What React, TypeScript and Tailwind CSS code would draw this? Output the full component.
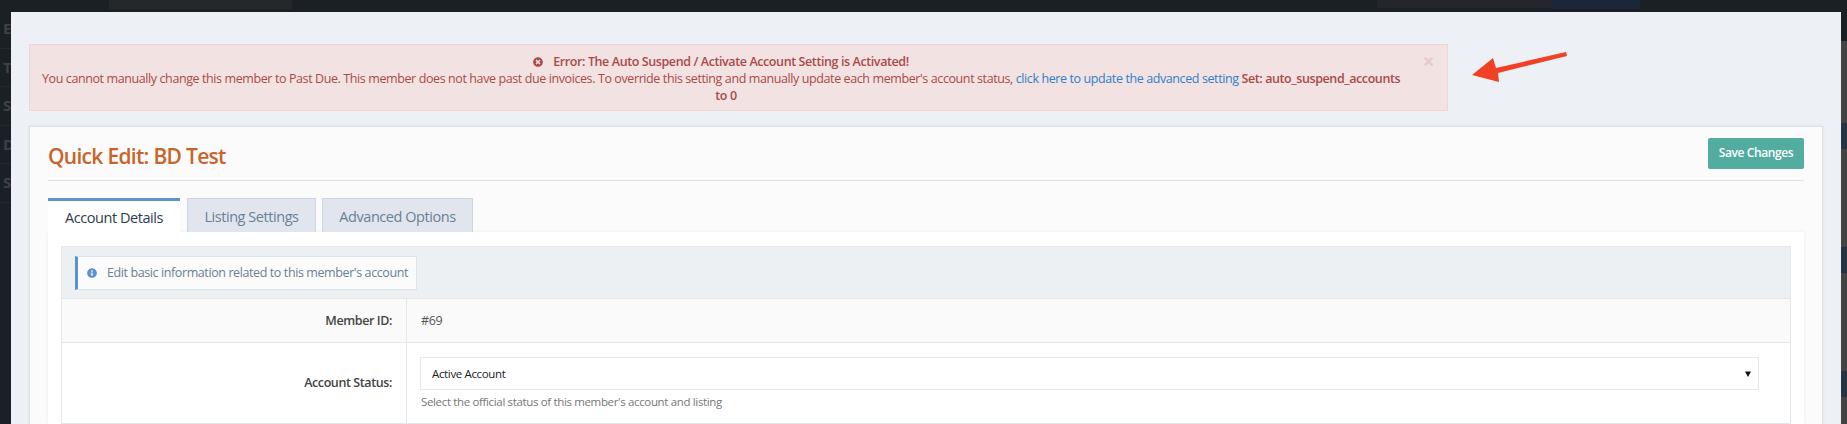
import React from "react";
import { FaInfoCircle, FaTimes, FaTimesCircle } from "react-icons/fa";

const sideLetters = ["E", "T", "S", "D", "S"];
const sideStripes = ["h-[41px]", "h-[82px]", "h-[26px]", "h-[98px]", "h-[26px]", "h-[98px]", "h-[26px]", "h-[27px]"];

function Backdrop() {
  return (
    <div className="h-full flex flex-col">
      <div className="h-[12px] flex shrink-0">
        <div className="w-[109px]" />
        <div className="w-[183px] h-[9px] bg-[#25272a]" />
        <div className="w-[1085px]" />
        <div className="w-[175px] h-[8px] bg-[#242629]" />
        <div className="w-[88px] h-[9px] bg-[#1c2639]" />
      </div>
      <div className="flex-1 flex justify-between">
        <div className="w-[11px] flex flex-col -mt-[2px] text-[15px] font-bold leading-[37.5px] text-[#3d4247]">
          {sideLetters.map((letter, i) => (
            <div key={i} className="pl-[3px] border-b border-[#23282d]">
              {letter}
            </div>
          ))}
        </div>
        <div className="w-[6px] -mt-[12px] flex flex-col">
          {sideStripes.map((h, i) => (
            <div
              key={i}
              className={`${h} ${i === 0 ? "bg-[#1b2024]" : i % 2 === 0 ? "bg-[#283341]" : "bg-[#444444]"}`}
            />
          ))}
        </div>
      </div>
    </div>
  );
}

function Alert() {
  return (
    <div className="relative w-[1419px] h-[67px] border border-[#efd5d8] bg-[#f2e2e2] pt-[8px] pl-[12px] text-center text-[12.5px] leading-[17px] text-[#aa4a48]">
      <div className="w-[1368px]">
        <div className="font-semibold pr-[10px]">
          <FaTimesCircle className="inline-block w-[10px] h-[10px] mr-[10px] -mt-[2px]" />
          Error: The Auto Suspend / Activate Account Setting is Activated!
        </div>
        <div className="whitespace-nowrap pr-[10px]">
          You cannot manually change this member to Past Due. This member does not have past due invoices. To override this setting and manually update each member's account status,{" "}
          <span className="text-[#2f80c8]">click here to update the advanced setting</span>{" "}
          <span className="font-semibold">Set: auto_suspend_accounts</span>
        </div>
        <div className="font-semibold">to 0</div>
      </div>
      <FaTimes className="absolute right-[12px] top-[10px] w-[13px] h-[13px] text-[#e6cbcb]" />
    </div>
  );
}

function Tabs() {
  return (
    <div className="flex items-start h-[34px] text-[14.5px] tracking-[-0.45px]">
      <div className="w-[132px] h-[34px] border-t-[3px] border-[#5b93cf] bg-white text-center leading-[34px] text-[#2e3b4e]">
        Account Details
      </div>
      <div className="ml-[7px] w-[129px] h-[34px] border border-b-0 border-[#cdd6e0] bg-[#e1e6ee] text-center leading-[36px] text-[#6b7f94]">
        Listing Settings
      </div>
      <div className="ml-[6px] w-[151px] h-[34px] border border-b-0 border-[#cdd6e0] bg-[#e1e6ee] text-center leading-[36px] text-[#6b7f94]">
        Advanced Options
      </div>
    </div>
  );
}

function DetailsTable() {
  return (
    <div className="border border-[#e5e8eb] text-[12.5px]">
      <div className="h-[52px] bg-[#edf0f3] border-b border-[#e5e8eb] pl-[13px] pt-[9px]">
        <div className="w-[342px] h-[34px] flex items-center border border-[#dfe3e8] border-l-[3px] border-l-[#5b93cf] bg-[#fbfbfb] pl-[9px] text-[#6b7f94] whitespace-nowrap">
          <FaInfoCircle className="w-[10px] h-[10px] mr-[10px] shrink-0 text-[#5b93cf]" />
          Edit basic information related to this member's account
        </div>
      </div>
      <div className="h-[44px] flex bg-[#fafafa] border-b border-[#e5e8eb]">
        <div className="w-[345px] border-r border-[#e5e8eb] pr-[14px] text-right font-semibold text-[#444444] leading-[44px]">
          Member ID:
        </div>
        <div className="pl-[14px] leading-[44px] text-[#555555]">#69</div>
      </div>
      <div className="h-[80px] flex bg-white">
        <div className="w-[345px] border-r border-[#e5e8eb] pr-[14px] pt-[30px] text-right font-semibold text-[#444444] leading-[20px]">
          Account Status:
        </div>
        <div className="pl-[13px] pt-[14px]">
          <div className="w-[1339px] h-[33px] flex items-center justify-between border border-[#e5e8eb] bg-white pl-[11px] pr-[6px] text-[11.5px] tracking-[-0.35px] text-[#222222]">
            Active Account
            <svg width="6" height="6" viewBox="0 0 6 6" className="mr-[1px]">
              <path d="M0 0.5h6L3 6z" fill="#111111" />
            </svg>
          </div>
          <div className="mt-[4px] pl-[1px] text-[11.5px] tracking-[-0.35px] leading-[16px] text-[#777777]">
            Select the official status of this member's account and listing
          </div>
        </div>
      </div>
    </div>
  );
}

function RedArrow() {
  return (
    <svg className="absolute left-[1472px] top-[52px]" width="100" height="36" viewBox="0 0 100 36">
      <path d="M0 23L21 6L24 16L94 0L95 4L26 21L27 30Z" fill="#f04124" />
    </svg>
  );
}

export default function App() {
  return (
    <div
      className="relative w-[1847px] h-[424px] overflow-hidden bg-[#1b2024] tracking-[-0.4px]"
      style={{ fontFamily: '"Open Sans", sans-serif' }}
    >
      <Backdrop />
      <div className="absolute left-[11px] top-[12px] w-[1830px] h-[412px] bg-[#edf1f5] pl-[18px] pt-[32px]">
        <Alert />
        <div className="mt-[15px] w-[1794px] h-[300px] border border-[#e0e2e4] bg-[#fbfbfb] px-[18px] shadow-[0_0_3px_rgba(0,0,0,0.08)]">
          <div className="h-[54px] flex items-center justify-between border-b border-[#e0e2e4] pb-[1px]">
            <h1 className="mt-[7px] text-[21px] tracking-[-0.7px] font-semibold text-[#c8642a]">Quick Edit: BD Test</h1>
            <button className="w-[96px] h-[31px] rounded-[2px] bg-[#52ac9f] text-[12px] font-semibold text-white">
              Save Changes
            </button>
          </div>
          <div className="mt-[17px]">
            <Tabs />
            <div className="bg-white px-[13px] pt-[14px] shadow-[0_0_4px_rgba(0,0,0,0.06)]">
              <DetailsTable />
            </div>
          </div>
        </div>
      </div>
      <RedArrow />
    </div>
  );
}
